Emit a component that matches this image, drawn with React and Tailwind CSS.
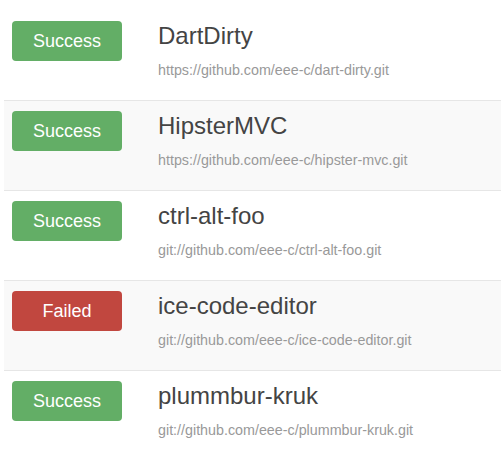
import React from "react";

const repos = [
  { name: "DartDirty", url: "https://github.com/eee-c/dart-dirty.git", ok: true },
  { name: "HipsterMVC", url: "https://github.com/eee-c/hipster-mvc.git", ok: true },
  { name: "ctrl-alt-foo", url: "git://github.com/eee-c/ctrl-alt-foo.git", ok: true },
  { name: "ice-code-editor", url: "git://github.com/eee-c/ice-code-editor.git", ok: false },
  { name: "plummbur-kruk", url: "git://github.com/eee-c/plummbur-kruk.git", ok: true },
];

const Row = ({ repo, index }) => (
  <div
    className={`flex h-[90px] pl-2 ${index === 0 ? "border-t border-transparent" : "border-t border-[#e6e6e6]"} ${
      index % 2 === 1 ? "bg-[#f9f9f9]" : "bg-white"
    }`}
  >
    <div className="pt-[10px]">
      <div
        className={`flex h-10 w-[110px] items-center justify-center rounded-[4px] text-[18px] text-white ${
          repo.ok ? "bg-[#63ae66]" : "bg-[#c1473f]"
        }`}
      >
        {repo.ok ? "Success" : "Failed"}
      </div>
    </div>
    <div className="ml-9 pt-[12px]">
      <div className="text-[24px] leading-[26px] text-[#444]">{repo.name}</div>
      <div className="mt-[11px] text-[14.3px] leading-[20px] text-[#999]">{repo.url}</div>
    </div>
  </div>
);

export default function App() {
  return (
    <div className="h-[458px] w-[501px] overflow-hidden bg-white font-['Liberation_Sans',Arial,sans-serif]">
      <div className="ml-1 pt-[10px]">
        {repos.map((repo, i) => (
          <Row key={repo.name} repo={repo} index={i} />
        ))}
      </div>
    </div>
  );
}
